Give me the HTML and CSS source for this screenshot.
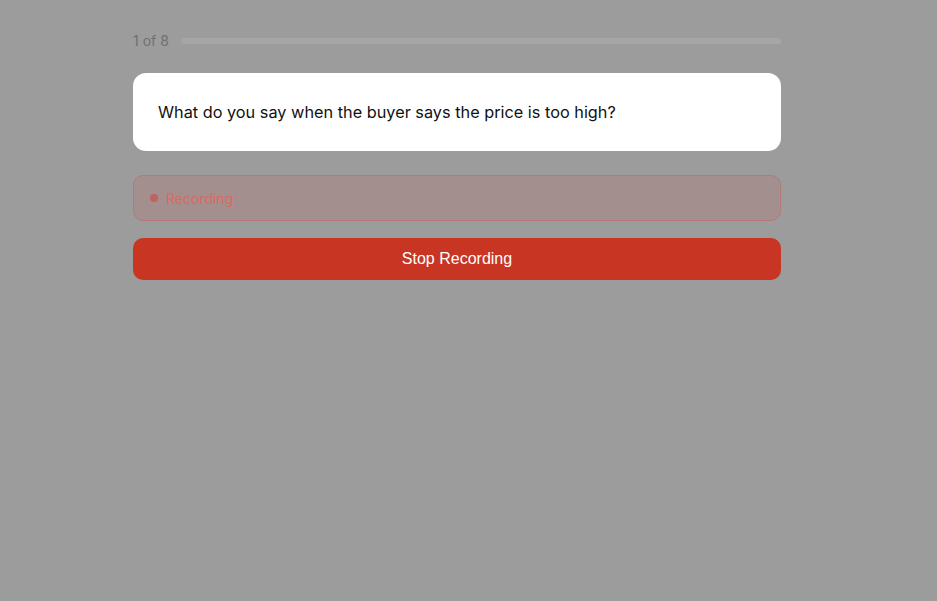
FILE: index.html
```html
<!DOCTYPE html>
<html>
<head>
<meta charset="utf-8">
<link rel="stylesheet" href="styles.css">
</head>
<body>
<main class="wrap">
  <div class="progress">
    <span class="count">1 of 8</span>
    <div class="track"></div>
  </div>
  <div class="question">What do you say when the buyer says the price is too high?</div>
  <div class="status">
    <span class="dot"></span>
    <span class="label">Recording</span>
  </div>
  <button class="stop">Stop Recording</button>
</main>
</body>
</html>
```
FILE: styles.css
```css
html, body {
  margin: 0;
  padding: 0;
  background: #9c9c9c;
  font-family: Inter, "Noto Sans", sans-serif;
}
.wrap {
  width: 648px;
  margin-left: 133px;
  padding-top: 31px;
  display: flex;
  flex-direction: column;
}
.progress {
  display: flex;
  align-items: center;
  gap: 12px;
  height: 20px;
  margin-bottom: 22px;
}
.count {
  font-size: 14px;
  color: #707070;
  line-height: 20px;
}
.track {
  flex: 1;
  height: 6px;
  border-radius: 3px;
  background: #a6a6a6;
}
.question {
  background: #ffffff;
  border-radius: 13px;
  padding: 28px 25px;
  font-size: 16.3px;
  line-height: 22px;
  color: #111111;
  margin-bottom: 24px;
}
.status {
  box-sizing: border-box;
  height: 46px;
  border: 1px solid #b27b76;
  border-radius: 10px;
  background: #a38f8d;
  display: flex;
  align-items: center;
  padding-left: 16px;
  gap: 8px;
  margin-bottom: 17px;
}
.dot {
  width: 8px;
  height: 8px;
  border-radius: 50%;
  background: #c0625e;
}
.label {
  font-size: 14px;
  color: #dc6a5e;
}
.stop {
  height: 42px;
  border: none;
  border-radius: 10px;
  background: #c93523;
  color: #ffffff;
  font-family: "Liberation Sans", Arial, sans-serif;
  font-size: 16px;
  padding: 0;
}
```
